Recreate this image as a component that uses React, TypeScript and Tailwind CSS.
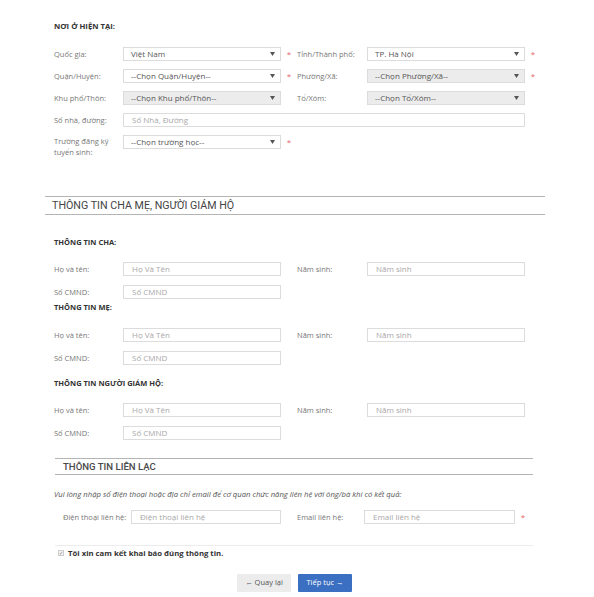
import React from 'react';

type Opt = { label: string; value: string; disabled?: boolean; required?: boolean };

function Arrow() {
  return (
    <svg width="5" height="4" viewBox="0 0 5 4" className="shrink-0">
      <path d="M0 0 L5 0 L2.5 4 Z" fill="#555" />
    </svg>
  );
}

function Star({ show }: { show?: boolean }) {
  return (
    <span className="w-[16px] shrink-0 flex justify-center text-[8px] leading-[14px] text-[#e46666]">
      {show ? '*' : ''}
    </span>
  );
}

function Select({ value, disabled, w = 'w-[158px]' }: { value: string; disabled?: boolean; w?: string }) {
  return (
    <div
      className={`${w} h-[14px] shrink-0 flex items-center justify-between pl-[7px] pr-[5px] border border-[#dcdcdc] text-[8px] text-[#555] ${
        disabled ? 'bg-[#ececec]' : 'bg-white'
      }`}
    >
      <span className="leading-none">{value}</span>
      <Arrow />
    </div>
  );
}

function Input({ placeholder, w = 'w-[158px]' }: { placeholder: string; w?: string }) {
  return (
    <div className={`${w} h-[14px] shrink-0 flex items-center pl-[8px] border border-[#dcdcdc] bg-white text-[8px] text-[#a8a8a8]`}>
      <span className="leading-none">{placeholder}</span>
    </div>
  );
}

function Label({ children, w = 'w-[69px]' }: { children: React.ReactNode; w?: string }) {
  return <span className={`${w} shrink-0 text-[7.5px] leading-[14px] text-[#777]`}>{children}</span>;
}

function SubTitle({ children }: { children: React.ReactNode }) {
  return <h4 className="pl-[54px] text-[7.5px] leading-[10px] font-bold text-[#333]">{children}</h4>;
}

function PersonBlock() {
  return (
    <div className="pl-[54px] flex flex-col gap-[9px]">
      <div className="flex">
        <Label>Họ và tên:</Label>
        <Input placeholder="Họ Và Tên" />
        <Star />
        <Label w="w-[70px]">Năm sinh:</Label>
        <Input placeholder="Năm sinh" />
      </div>
      <div className="flex">
        <Label>Số CMND:</Label>
        <Input placeholder="Số CMND" />
      </div>
    </div>
  );
}

export default function App() {
  const rows: [Opt, Opt][] = [
    [
      { label: 'Quốc gia:', value: 'Việt Nam', required: true },
      { label: 'Tỉnh/Thành phố:', value: 'TP. Hà Nội', required: true },
    ],
    [
      { label: 'Quận/Huyện:', value: '--Chọn Quận/Huyện--', required: true },
      { label: 'Phường/Xã:', value: '--Chọn Phường/Xã--', disabled: true, required: true },
    ],
    [
      { label: 'Khu phố/Thôn:', value: '--Chọn Khu phố/Thôn--', disabled: true },
      { label: 'Tổ/Xóm:', value: '--Chọn Tổ/Xóm--', disabled: true },
    ],
  ];

  return (
    <div className="w-[594px] h-[597px] bg-white overflow-hidden font-['Open_Sans',sans-serif]">
      {/* Nơi ở hiện tại */}
      <div className="pl-[54px] pt-[21px]">
        <h3 className="text-[7.7px] leading-[10px] font-bold text-[#333]">NƠI Ở HIỆN TẠI:</h3>
        <div className="mt-[16px] flex flex-col gap-[8px]">
          {rows.map(([a, b]) => (
            <div key={a.label} className="flex">
              <Label>{a.label}</Label>
              <Select value={a.value} disabled={a.disabled} />
              <Star show={a.required} />
              <Label w="w-[70px]">{b.label}</Label>
              <Select value={b.value} disabled={b.disabled} />
              <Star show={b.required} />
            </div>
          ))}
          <div className="flex">
            <Label>Số nhà, đường:</Label>
            <Input placeholder="Số Nhà, Đường" w="w-[402px]" />
          </div>
          <div className="flex items-start">
            <span className="w-[69px] shrink-0 pt-[1px] text-[7.5px] leading-[11px] text-[#777]">
              Trường đăng ký
              <br />
              tuyển sinh:
            </span>
            <Select value="--Chọn trường học--" />
            <Star show />
          </div>
        </div>
      </div>

      {/* Thông tin cha mẹ */}
      <div className="ml-[45px] w-[500px] mt-[38px] h-[19px] border-y border-[#b4b4b4] pl-[7px] font-['Roboto',sans-serif] text-[10.7px] leading-[17px] text-[#444]">
        THÔNG TIN CHA MẸ, NGƯỜI GIÁM HỘ
      </div>

      <div className="mt-[22px]">
        <SubTitle>THÔNG TIN CHA:</SubTitle>
        <div className="mt-[15px]">
          <PersonBlock />
        </div>
      </div>
      <div className="mt-[3px]">
        <SubTitle>THÔNG TIN MẸ:</SubTitle>
        <div className="mt-[16px]">
          <PersonBlock />
        </div>
      </div>
      <div className="mt-[13px]">
        <SubTitle>THÔNG TIN NGƯỜI GIÁM HỘ:</SubTitle>
        <div className="mt-[15px]">
          <PersonBlock />
        </div>
      </div>

      {/* Thông tin liên lạc */}
      <div className="ml-[55px] w-[478px] mt-[18px] h-[17px] border-y border-[#b4b4b4] pl-[8px] font-['Roboto',sans-serif] font-medium text-[9.6px] leading-[15px] text-[#4a4a4a]">
        THÔNG TIN LIÊN LẠC
      </div>
      <p className="mt-[14px] pl-[54px] text-[7.7px] leading-[10px] italic text-[#555]">
        Vui lòng nhập số điện thoại hoặc địa chỉ email để cơ quan chức năng liên hệ với ông/bà khi có kết quả:
      </p>
      <div className="mt-[11px] pl-[63px] flex">
        <Label w="w-[68px]">Điện thoại liên hệ:</Label>
        <Input placeholder="Điện thoại liên hệ" w="w-[150px]" />
        <span className="w-[16px] shrink-0" />
        <Label w="w-[67px]">Email liên hệ:</Label>
        <Input placeholder="Email liên hệ" w="w-[151px]" />
        <Star show />
      </div>

      <div className="ml-[55px] w-[478px] mt-[21px] border-t border-[#ececec] pt-[2px] pl-[3px] flex items-center gap-[4px]">
        <span className="w-[6px] h-[6px] border border-[#ccc] bg-[#f4f4f4] flex items-center justify-center text-[5px] leading-none text-[#777]">
          ✓
        </span>
        <span className="text-[7.75px] leading-[10px] font-bold text-[#333]">Tôi xin cam kết khai báo đúng thông tin.</span>
      </div>

      <div className="mt-[16px] flex justify-center gap-[7px] pr-[5px]">
        <button className="w-[54px] h-[18px] bg-[#ececec] text-[7.5px] text-[#555] rounded-[1px]">← Quay lại</button>
        <button className="w-[54px] h-[18px] bg-[#3b6fc2] text-[7.5px] text-white rounded-[1px]">Tiếp tục →</button>
      </div>
    </div>
  );
}
